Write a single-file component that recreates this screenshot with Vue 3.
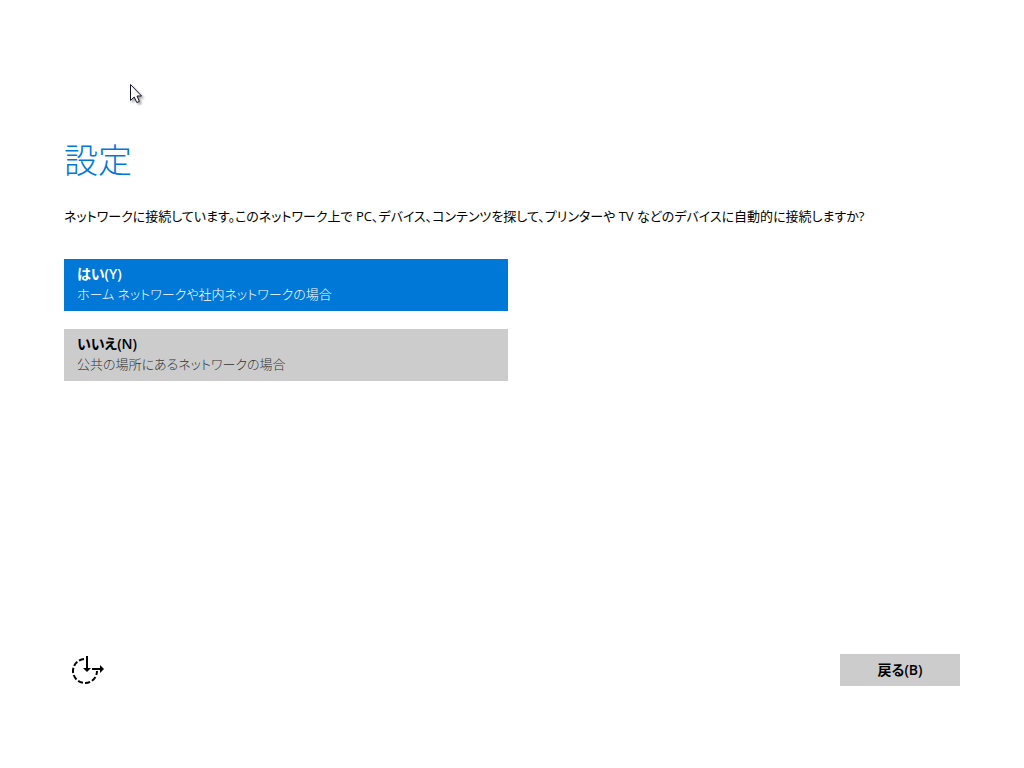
<script setup>
const choices = [
  { key: 'yes', label: 'はい(Y)', note: 'ホーム ネットワークや社内ネットワークの場合', accesskey: 'y' },
  { key: 'no', label: 'いいえ(N)', note: '公共の場所にあるネットワークの場合', accesskey: 'n' },
]
</script>

<template>
  <div class="setup" lang="ja">
    <main>
      <h1>設定</h1>
      <p class="question">ネットワークに接続しています。このネットワーク上で PC、デバイス、コンテンツを探して、プリンターや TV などのデバイスに自動的に接続しますか?</p>
      <div class="choices">
        <button v-for="c in choices" :key="c.key" type="button" class="choice" :class="c.key" :accesskey="c.accesskey">
          <span class="label">{{ c.label }}</span>
          <span class="note">{{ c.note }}</span>
        </button>
      </div>
    </main>
    <footer>
      <button type="button" class="ease" aria-label="簡単操作">
        <svg width="48" height="32" viewBox="0 0 48 32" aria-hidden="true">
          <g fill="none" stroke="#000" stroke-width="2">
            <path d="M20 5A12 12 0 1 0 33 17" stroke-dasharray="5.2 2.1" />
            <path d="M23 2V15M28 15H37" />
          </g>
          <path d="M19 14H27L23 18ZM36 11L40 15L36 19Z" />
        </svg>
      </button>
      <button type="button" class="back" accesskey="b">戻る(B)</button>
    </footer>
    <svg class="pointer" width="20" height="24" viewBox="0 0 20 24" aria-hidden="true">
      <path d="M1.5 1.5V17.5L5.2 14L7.8 19.5L10.4 18.4L8 13H12.5Z" fill="#fff" stroke="#101028" stroke-width="1" />
    </svg>
  </div>
</template>

<style>
body {
  background: #fff;
}
</style>

<style scoped>
.setup {
  position: relative;
  box-sizing: border-box;
  min-height: 100vh;
  padding: 136px 64px 82px;
  display: flex;
  flex-direction: column;
  justify-content: space-between;
  background: #fff;
  color: #000;
  font-family: "Open Sans", "Noto Sans CJK JP", sans-serif;
  font-size: 13px;
  line-height: 20px;
  font-feature-settings: "palt";
}
h1 {
  margin: 0;
  color: #0078d7;
  font-size: 34px;
  line-height: 48px;
  font-weight: 200;
}
.question {
  margin: 22px 0 0;
}
.choices {
  margin-top: 33px;
  display: flex;
  flex-direction: column;
  gap: 18px;
  width: 50%;
  max-width: 444px;
}
button {
  border: 0;
  border-radius: 0;
  background: #ccc;
  color: #000;
  font: inherit;
  font-feature-settings: inherit;
}
.choice {
  padding: 5px 13px 7px;
  text-align: left;
}
.choice span {
  display: block;
}
.label,
.back {
  font-size: 14px;
  font-weight: 600;
}
.note {
  font-weight: 300;
}
.yes {
  background: #0078d7;
  color: #fff;
}
.no .note {
  color: #333;
}
footer {
  display: flex;
  justify-content: space-between;
  align-items: center;
}
.ease {
  padding: 0;
  background: transparent;
}
.ease svg {
  display: block;
}
.back {
  width: 120px;
  padding: 6px 0;
}
.pointer {
  position: absolute;
  left: 129px;
  top: 83px;
  filter: drop-shadow(2px 2px 1px rgba(0, 0, 0, 0.35));
}
</style>
